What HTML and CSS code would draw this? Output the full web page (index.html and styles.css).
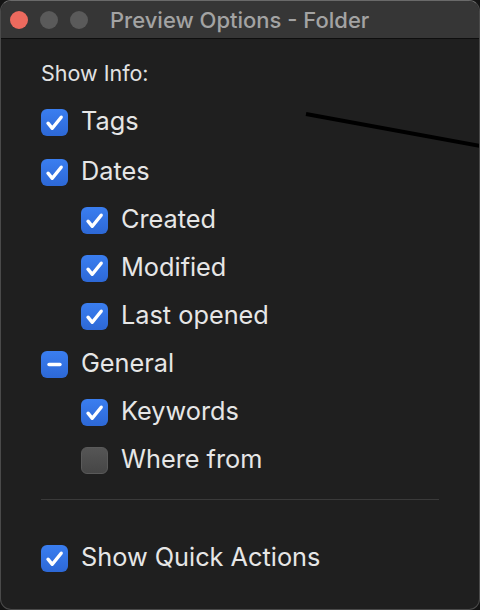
FILE: index.html
```html
<!DOCTYPE html>
<html>
<head>
<meta charset="utf-8">
<link rel="stylesheet" href="styles.css">
</head>
<body>
<div class="window">
  <div class="titlebar">
    <div class="lights">
      <span class="light red"></span>
      <span class="light gray"></span>
      <span class="light gray"></span>
    </div>
    <div class="title">Preview Options - Folder</div>
  </div>
  <div class="content">
    <div class="heading">Show Info:</div>
    <div class="row top tags"><span class="box on"><svg viewBox="0 0 27 27"><path d="M7 14.2 L11.3 19.3 L20.2 8.2"/></svg></span><span class="label">Tags</span></div>
    <div class="row top"><span class="box on"><svg viewBox="0 0 27 27"><path d="M7 14.2 L11.3 19.3 L20.2 8.2"/></svg></span><span class="label">Dates</span></div>
    <div class="row sub"><span class="box on"><svg viewBox="0 0 27 27"><path d="M7 14.2 L11.3 19.3 L20.2 8.2"/></svg></span><span class="label">Created</span></div>
    <div class="row sub"><span class="box on"><svg viewBox="0 0 27 27"><path d="M7 14.2 L11.3 19.3 L20.2 8.2"/></svg></span><span class="label">Modified</span></div>
    <div class="row sub"><span class="box on"><svg viewBox="0 0 27 27"><path d="M7 14.2 L11.3 19.3 L20.2 8.2"/></svg></span><span class="label">Last opened</span></div>
    <div class="row top"><span class="box on"><svg viewBox="0 0 27 27"><path d="M8 13.5 L19 13.5"/></svg></span><span class="label">General</span></div>
    <div class="row sub"><span class="box on"><svg viewBox="0 0 27 27"><path d="M7 14.2 L11.3 19.3 L20.2 8.2"/></svg></span><span class="label">Keywords</span></div>
    <div class="row sub"><span class="box off"></span><span class="label">Where from</span></div>
    <div class="separator"></div>
    <div class="row top quick"><span class="box on"><svg viewBox="0 0 27 27"><path d="M7 14.2 L11.3 19.3 L20.2 8.2"/></svg></span><span class="label">Show Quick Actions</span></div>
  </div>
  <svg class="stroke" viewBox="0 0 480 610" width="480" height="610"><path d="M306 114 L480 146"/></svg>
</div>
</body>
</html>
```
FILE: styles.css
```css
html, body {
  margin: 0;
  padding: 0;
  background: #141414;
}
body {
  width: 480px;
  height: 610px;
  overflow: hidden;
  font-family: Inter, "Liberation Sans", sans-serif;
}
.window {
  position: relative;
  box-sizing: border-box;
  width: 480px;
  height: 610px;
  border: 1px solid #4a4a4a;
  border-top-color: #6a6a6a;
  border-radius: 11px;
  overflow: hidden;
  background: #1f1f1f;
  display: flex;
  flex-direction: column;
}
.titlebar {
  box-sizing: border-box;
  height: 38px;
  flex: none;
  background: #363636;
  border-bottom: 1px solid #0e0e0e;
  display: flex;
  align-items: center;
}
.lights {
  display: flex;
  gap: 12px;
  padding-left: 9px;
}
.light {
  width: 18px;
  height: 18px;
  border-radius: 50%;
  background: #5a5a5a;
}
.light.red {
  background: #ec6a5e;
}
.title {
  margin-left: 22px;
  color: #a3a3a3;
  font-size: 22px;
  font-weight: 500;
}
.content {
  display: flex;
  flex-direction: column;
  padding: 20px 40px 0 40px;
}
.heading {
  height: 28px;
  line-height: 28px;
  color: #e2e2e2;
  font-size: 21.5px;
  margin-bottom: 11px;
}
.row {
  height: 48px;
  display: flex;
  align-items: center;
  gap: 13px;
}
.row.tags {
  margin-bottom: 2px;
}
.row.sub {
  padding-left: 40px;
}
.label {
  color: #e6e6e6;
  font-size: 25.3px;
  padding-bottom: 3px;
}
.box {
  box-sizing: border-box;
  width: 27px;
  height: 27px;
  border-radius: 6px;
  flex: none;
  display: flex;
}
.box.on {
  background: linear-gradient(#3a7ef0, #2d68d6);
}
.box.off {
  background: linear-gradient(#555555, #464646);
  border: 1px solid #5a5a5a;
}
.box svg {
  width: 27px;
  height: 27px;
}
.box svg path {
  fill: none;
  stroke: #ffffff;
  stroke-width: 3.4;
  stroke-linecap: round;
  stroke-linejoin: round;
}
.separator {
  height: 1px;
  background: #3a3a3a;
  margin-top: 15px;
}
.row.quick {
  margin-top: 34px;
}
.stroke {
  position: absolute;
  left: -1px;
  top: -1px;
  pointer-events: none;
}
.stroke path {
  stroke: #000000;
  stroke-width: 4;
  fill: none;
}
```
